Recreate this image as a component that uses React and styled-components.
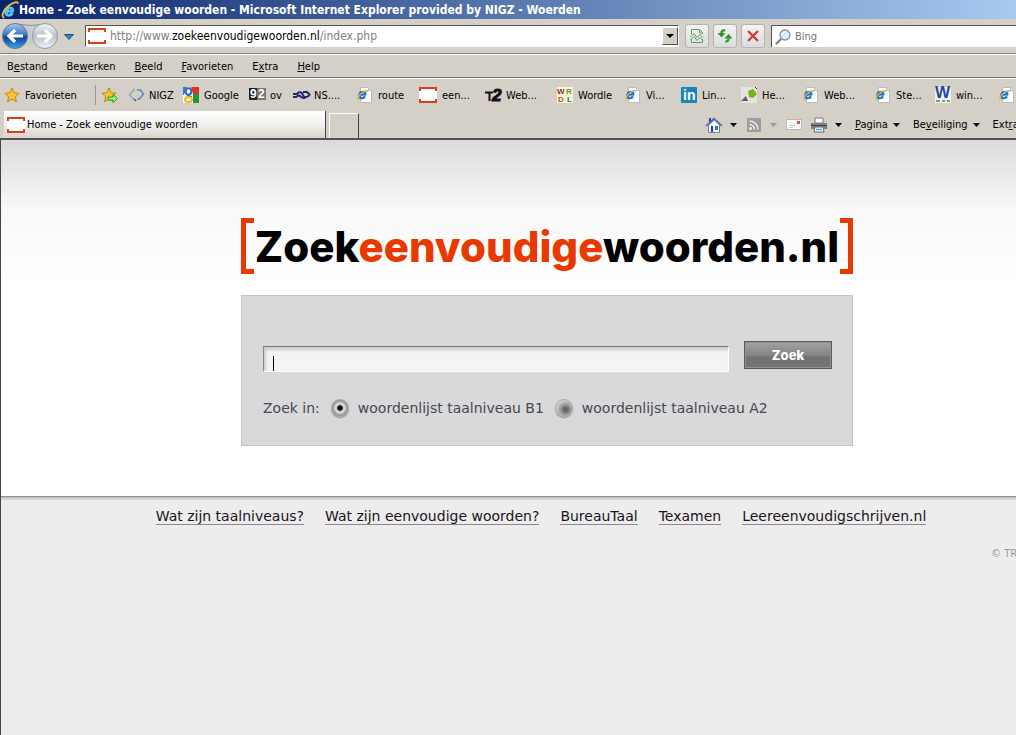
import styled, { createGlobalStyle } from "styled-components";

const bookmarks = [
    { icon: "nigz", text: "NIGZ", width: 55 },
    { icon: "google", text: "Google", width: 66 },
    { icon: "ov", text: "ov", width: 44 },
    { icon: "ns", text: "NS....", width: 64 },
    { icon: "page", text: "route", width: 62 },
    { icon: "site", text: "een...", width: 66 },
    { icon: "t2", text: "Web...", width: 72 },
    { icon: "wordle", text: "Wordle", width: 68 },
    { icon: "page", text: "Vi...", width: 56 },
    { icon: "linkedin", text: "Lin...", width: 60 },
    { icon: "he", text: "He...", width: 62 },
    { icon: "page", text: "Web...", width: 72 },
    { icon: "page", text: "Ste...", width: 60 },
    { icon: "win", text: "win...", width: 64 },
    { icon: "page", text: "", width: 72 },
];

const menu = [
    ["B", "e", "stand"],
    ["Be", "w", "erken"],
    ["", "B", "eeld"],
    ["", "F", "avorieten"],
    ["E", "x", "tra"],
    ["", "H", "elp"],
];

const footerLinks = [
    "Wat zijn taalniveaus?",
    "Wat zijn eenvoudige woorden?",
    "BureauTaal",
    "Texamen",
    "Leereenvoudigschrijven.nl",
];

const star = "M8 1l2.1 4.7 5 .6-3.7 3.4 1 5L8 12.200l-4.400 2.500 1-5L.9 6.300l5-.6z";

function Explorer({ size = 16 }) {
    return (
        <svg width={size} height={size} viewBox="0 0 16 16">
            <text x="3" y="13" fontSize="15" fontWeight="bold" fontStyle="italic" fontFamily="Liberation Sans" fill="#5cc0f5" stroke="#5cc0f5">e</text>
            <path d="M3 15C-.5 14 2 8 7 4c4-3 8-4 8-1.500" fill="none" stroke="#f5c52c" strokeWidth="1.600" />
        </svg>
    );
}

function SiteIcon() {
    return (
        <svg width="18" height="16" viewBox="0 0 18 16">
            <rect width="18" height="16" fill="#fff" />
            <path d="M1 4V1h16v3M1 12v3h16v-3" fill="none" stroke="#d8401c" strokeWidth="2" />
        </svg>
    );
}

function Icon({ name }) {
    if (name === "site") return <SiteIcon />;

    return (
        <svg width="16" height="16" viewBox="0 0 16 16" fontFamily="Liberation Sans" fontWeight="bold">
            {name === "page" && (
                <>
                    <path d="M3.500.5h8l3 3v12h-11z" fill="#fff" stroke="#b4bccb" />
                    <path d="M11.500.5v3h3" fill="#dde5f0" stroke="#b4bccb" />
                    <text x="1" y="12" fontSize="15" fontStyle="italic" fill="#1a6fc4" stroke="#1a6fc4" strokeWidth=".6">e</text>
                    <path d="M1.500 13.500C-.5 12 3 7 6 5S11.500 3 10.500 5" fill="none" stroke="#d9b838" strokeWidth="1.300" />
                </>
            )}
            {name === "nigz" && (
                <>
                    <path d="M6.500 2L1.500 8l4.500 4" fill="none" stroke="#9aa4b2" strokeWidth="1.500" />
                    <path d="M9 3h3.500l3 4-4 5H9" fill="none" stroke="#5f86b4" strokeWidth="1.500" />
                    <path d="M6 12l2 2" stroke="#555" strokeWidth="1.500" />
                </>
            )}
            {name === "google" && (
                <>
                    <rect width="16" height="16" fill="#fff" />
                    <path d="M8 0h8v7h-6z" fill="#e33122" />
                    <path d="M10 7h6v9h-6z" fill="#20973b" />
                    <path d="M0 0h4L1 8H0z" fill="#3b76dc" />
                    <ellipse cx="5.500" cy="4.500" rx="2.800" ry="3.200" fill="#fff" stroke="#2e66c8" strokeWidth="2" />
                    <path d="M4 8.500l5 2" stroke="#2e66c8" strokeWidth="2" />
                    <ellipse cx="5.500" cy="12.500" rx="3.500" ry="2.500" fill="#fff" stroke="#f3b51e" strokeWidth="2" />
                </>
            )}
            {name === "ov" && (
                <>
                    <rect y="1" width="8" height="12" fill="#222" />
                    <rect x="8" y="1" width="9" height="12" fill="#777" />
                    <text x="1" y="11" fontSize="12" fill="#fff">9</text>
                    <text x="9" y="11" fontSize="12" fill="#fff">2</text>
                </>
            )}
            {name === "ns" && (
                <path d="M0 7h4C6 4 9 5 10 8s3 3 7 0M0 10h2c3 0 3-3 5-1s4 3 6 1M10 5h4l3 3" fill="none" stroke="#23236e" strokeWidth="2" />
            )}
            {name === "t2" && (
                <>
                    <path d="M0 5.500h8M4.500 5v9" stroke="#111" strokeWidth="2" />
                    <text x="7" y="14" fontSize="17" fontStyle="italic" fill="#111" stroke="#111">2</text>
                </>
            )}
            {name === "wordle" && (
                <>
                    <rect width="16" height="16" fill="#f8f5d8" />
                    <g fontSize="8">
                        <text x="0" y="7" fill="#8c2f28">W</text>
                        <text x="9" y="7" fill="#67983a">R</text>
                        <text x="1" y="15" fill="#a8622b">D</text>
                        <text x="10" y="15" fill="#2a6a72">L</text>
                    </g>
                </>
            )}
            {name === "linkedin" && (
                <>
                    <rect width="16" height="16" rx="1" fill="#1b86b4" />
                    <text x="2" y="13" fontSize="14" fill="#fff">in</text>
                </>
            )}
            {name === "he" && (
                <>
                    <rect width="16" height="16" fill="#e4e4dc" />
                    <path d="M0 14l5-5 2 5z" fill="#6d4c8c" />
                    <path d="M7 4l5-2 4 5-4 4-4-1z" fill="#73b31e" />
                    <path d="M14 0l2 2" stroke="#333" />
                </>
            )}
            {name === "win" && (
                <>
                    <rect width="16" height="16" fill="#eef0f4" />
                    <text x="0" y="11" fontSize="16" fill="#27479c">W</text>
                    <path d="M1 14h4m2 0h3m2 0h3" stroke="#8aa05c" strokeWidth="2" />
                </>
            )}
            {name === "star" && <path d={star} fill="#fbc531" stroke="#c9830f" />}
            {name === "add" && (
                <>
                    <path d={star} fill="#fbc531" stroke="#c9830f" />
                    <path d="M7 10h5V7.500l4.500 4-4.500 4V13H7z" fill="#a5ef85" stroke="#2b9a2b" />
                </>
            )}
            {name === "home" && (
                <>
                    <path d="M3 1h2v4H3z" fill="#3442a0" />
                    <path d="M2.500 8l6-5 5 5v7.500h-11z" fill="#f4f7ff" stroke="#6a7cb0" />
                    <path d="M0 9l8-7.500L16 9" fill="none" stroke="#4a5ea8" strokeWidth="1.500" />
                    <path d="M5 9h2v6H5z" fill="#1d3f86" />
                    <path d="M9 9h3v4H9z" fill="#3b71bb" />
                </>
            )}
            {name === "feed" && (
                <>
                    <rect x="1" y="1" width="14" height="14" rx="1" fill="#9c9c9c" />
                    <circle cx="4.500" cy="11.500" r="1.500" fill="#eee" />
                    <path d="M3.500 7.500a5 5 0 015 5M3.500 4a8.500 8.500 0 018.500 8.500" fill="none" stroke="#eee" strokeWidth="1.500" />
                </>
            )}
            {name === "mail" && (
                <>
                    <rect x=".5" y="2.500" width="15" height="10" fill="#fafafa" stroke="#b7b7b7" />
                    <path d="M3 8.500h6M3 10.500h4" stroke="#ccc" />
                    <rect x="11" y="4" width="3" height="3" fill="#dc4b4b" />
                </>
            )}
            {name === "print" && (
                <>
                    <path d="M4 1h8v5H4z" fill="#fff" stroke="#777" />
                    <path d="M0 6h16v6H0z" fill="#7d8087" />
                    <path d="M0 8.500h16" stroke="#3d4148" />
                    <path d="M4 10h8l1 5H3z" fill="#fff" stroke="#666" />
                    <path d="M5 12.500h6" stroke="#5b9ad5" strokeWidth="1.500" />
                </>
            )}
            {name === "compat" && (
                <path d="M2.500 6V1.500h8l3 3V6M10.500 2v3h3M2.500 11v3.500h11V11M1.500 9L5 5.500l3 4 3-3 3 3M1.500 12L5 8.500l3 4 3-3 3 3" fill="none" stroke="#5da05d" />
            )}
            {name === "refresh" && (
                <>
                    <path d="M8 2.500C5 2 4.500 3.500 4.500 5" fill="none" stroke="#2a962a" strokeWidth="2.400" />
                    <path d="M.5 5h8l-4 4.500z" fill="#2a962a" />
                    <path d="M8.500 13.500c2.500.2 3-1.500 3-3" fill="none" stroke="#2a962a" strokeWidth="2.400" />
                    <path d="M7.500 10.500h8L11.500 6z" fill="#2a962a" />
                </>
            )}
            {name === "stop" && <path d="M3 3l10 10M13 3L3 13" stroke="#cf3d3d" strokeWidth="2.400" />}
            {name === "search" && (
                <>
                    <path d="M6 10l-5 5" stroke="#7b8290" strokeWidth="2.400" />
                    <circle cx="10" cy="6" r="5" fill="#d9ecfb" stroke="#7f93b3" strokeWidth="1.300" />
                    <path d="M7 5.500q1-2.500 3.500-2.500" fill="none" stroke="#fff" strokeWidth="1.500" />
                </>
            )}
        </svg>
    );
}

function TravelIcon() {
    return (
        <svg width="60" height="28" viewBox="0 0 60 28">
            <defs>
                <linearGradient id="back" x2="0" y2="1">
                    <stop offset="0" stopColor="#a9cdf0" />
                    <stop offset=".45" stopColor="#3a76c4" />
                    <stop offset=".55" stopColor="#0d3f96" />
                    <stop offset="1" stopColor="#3fa6ee" />
                </linearGradient>
                <linearGradient id="forward" x2="0" y2="1">
                    <stop offset="0" stopColor="#f4f6f8" />
                    <stop offset=".5" stopColor="#b7c0ca" />
                    <stop offset="1" stopColor="#edf3f8" />
                </linearGradient>
            </defs>
            <path d="M15 2q15 3 30 0v22q-15-3-30 0z" fill="#c9cacc" />
            <path d="M15 2q15 3 30 0" fill="none" stroke="#8e9095" />
            <circle cx="14" cy="14" r="12.500" fill="url(#back)" stroke="#67768e" />
            <circle cx="44" cy="14" r="12.500" fill="url(#forward)" stroke="#929aa5" />
            <path d="M22 14H8m6-6l-6 6 6 6" fill="none" stroke="#fff" strokeWidth="3.200" />
            <path d="M36 14h14m-6-6l6 6-6 6" fill="none" stroke="#fff" strokeWidth="3.200" />
        </svg>
    );
}

function Arrow({ color = "#000", width = 7 }) {
    return (
        <svg width={width} height="4" viewBox="0 0 8 4" preserveAspectRatio="none">
            <path d="M0 0h8L4 4z" fill={color} />
        </svg>
    );
}

function Browser() {
    return (
        <Chrome>
            <TitleBar>
                <Explorer size={18} />
                Home - Zoek eenvoudige woorden - Microsoft Internet Explorer provided by NIGZ - Woerden
            </TitleBar>
            <NavBar>
                <Travel type="button" aria-label="Vorige en volgende"><TravelIcon /></Travel>
                <History type="button" aria-label="Recente pagina's">
                    <svg width="10" height="6" viewBox="0 0 10 6"><path d="M.5.5h9L5 5.500z" fill="#2c8dc4" stroke="#194e7c" /></svg>
                </History>
                <Address>
                    <SiteIcon />
                    <Url>http://www.<b>zoekeenvoudigewoorden.nl</b>/index.php</Url>
                    <DropButton type="button" aria-label="Adressen tonen"><Arrow width={8} /></DropButton>
                </Address>
                <NavButtons>
                    <NavButton type="button" aria-label="Compatibiliteit"><Icon name="compat" /></NavButton>
                    <NavButton type="button" aria-label="Vernieuwen"><Icon name="refresh" /></NavButton>
                    <NavButton type="button" aria-label="Stoppen"><Icon name="stop" /></NavButton>
                </NavButtons>
                <Bing>
                    <Icon name="search" />
                    <BingInput placeholder="Bing" aria-label="Bing" />
                </Bing>
            </NavBar>
            <MenuBar>
                {menu.map(([before, key, after]) => (
                    <MenuItem type="button" key={after}>{before}<u>{key}</u>{after}</MenuItem>
                ))}
            </MenuBar>
            <LinksBar>
                <Favorites type="button"><Icon name="star" />Favorieten</Favorites>
                <AddFavorite type="button" aria-label="Toevoegen"><Icon name="add" /></AddFavorite>
                {bookmarks.map((item, i) => (
                    <Bookmark href="#" key={i} $width={item.width}>
                        <Icon name={item.icon} />
                        {item.text}
                    </Bookmark>
                ))}
            </LinksBar>
            <TabBar>
                <Tab type="button"><SiteIcon />Home - Zoek eenvoudige woorden</Tab>
                <NewTab type="button" aria-label="Nieuw tabblad" />
                <Commands>
                    <Command type="button" aria-label="Startpagina"><Icon name="home" /><Arrow /></Command>
                    <Command type="button" aria-label="Feeds"><Icon name="feed" /><Arrow color="#999" /></Command>
                    <Command type="button" aria-label="E-mail"><Icon name="mail" /></Command>
                    <Command type="button" aria-label="Afdrukken"><Icon name="print" /><Arrow /></Command>
                    <Command type="button" $text><span><u>P</u>agina</span><Arrow /></Command>
                    <Command type="button" $text><span>Be<u>v</u>eiliging</span><Arrow /></Command>
                    <Command type="button" $text><span>Ext<u>r</u>a</span><Arrow /></Command>
                </Commands>
            </TabBar>
        </Chrome>
    );
}

export default function App() {
    return (
        <Window>
            <GlobalStyle />
            <Browser />
            <Viewport>
                <Page>
                    <Main>
                        <Logo>
                            <Bracket />
                            <LogoText>Zoek<em>eenvoudige</em>woorden.nl</LogoText>
                            <Bracket $right />
                        </Logo>
                        <SearchBox onSubmit={(e) => e.preventDefault()}>
                            <SearchRow>
                                <Field>
                                    <SearchInput type="text" aria-label="Zoekwoord" />
                                    <Caret />
                                </Field>
                                <SearchButton type="submit">Zoek</SearchButton>
                            </SearchRow>
                            <Levels>
                                <span>Zoek in:</span>
                                <Level>
                                    <Radio type="radio" name="niveau" defaultChecked />
                                    woordenlijst taalniveau B1
                                </Level>
                                <Level>
                                    <Radio type="radio" name="niveau" />
                                    woordenlijst taalniveau A2
                                </Level>
                            </Levels>
                        </SearchBox>
                    </Main>
                    <Footer>
                        <FooterLinks>
                            {footerLinks.map((text) => <a href="#" key={text}>{text}</a>)}
                        </FooterLinks>
                        <Copyright>© TRIMM</Copyright>
                    </Footer>
                </Page>
            </Viewport>
        </Window>
    );
}

const GlobalStyle = createGlobalStyle`
    * {
        box-sizing: border-box;
    }

    body {
        margin: 0;
        background: #ededed;
    }

    button {
        padding: 0;
        border: 0;
        background: none;
        font: inherit;
        color: inherit;
        white-space: nowrap;
    }

    svg {
        flex: none;
        overflow: visible;
    }
`

const Window = styled.div`
    display: flex;
    flex-direction: column;
    min-height: 100vh;
    overflow: hidden;
`

const Chrome = styled.header`
    background: #d4d0c8;
    border-bottom: 2px solid #55534f;
    font: 11px "DejaVu Sans Condensed", "DejaVu Sans", sans-serif;
    color: #000;
    white-space: nowrap;
    overflow: hidden;
`

const TitleBar = styled.div`
    display: flex;
    align-items: center;
    height: 19px;
    padding-left: 1px;
    background: linear-gradient(90deg, #0a246a, #a6caf0);
    color: #fff;
    font-size: 12px;
    font-weight: bold;
`

const NavBar = styled.div`
    display: flex;
    align-items: center;
    height: 35px;
    padding-left: 1px;
    border-bottom: 1px solid #848178;
`

const Travel = styled.button`
    display: flex;
`

const History = styled.button`
    width: 24px;
    padding: 0 8px 0 0;
`

const Address = styled.div`
    display: flex;
    align-items: center;
    flex: 2 1 0;
    height: 22px;
    padding-left: 2px;
    background: #fff;
    border: 1px solid #fff;
    border-top-color: #555;
    border-left-color: #555;
`

const Url = styled.span`
    flex: 1;
    padding-left: 4px;
    color: #808080;
    font-size: 12px;

    b {
        color: #000;
        font-weight: normal;
    }
`

const DropButton = styled.button`
    display: flex;
    align-items: center;
    justify-content: center;
    width: 16px;
    height: 18px;
    background: #d4d0c8;
    border: 1px solid #555;
    border-top-color: #fff;
    border-left-color: #fff;
`

const NavButtons = styled.div`
    display: flex;
    gap: 4px;
    padding: 0 6px;
`

const NavButton = styled.button`
    display: flex;
    align-items: center;
    justify-content: center;
    width: 24px;
    height: 24px;
    background: linear-gradient(#f3f3f3, #dcdcdf);
    border: 1px solid #b4b2b5;
    border-radius: 3px;
`

const Bing = styled.div`
    display: flex;
    align-items: center;
    gap: 4px;
    width: 245px;
    height: 22px;
    padding-left: 3px;
    background: #fff;
    border-top: 1px solid #555;
    border-left: 1px solid #555;
`

const BingInput = styled.input`
    flex: 1;
    min-width: 0;
    padding: 0;
    border: 0;
    outline: 0;
    font: inherit;

    &::placeholder {
        color: #777;
    }
`

const MenuBar = styled.nav`
    display: flex;
    align-items: center;
    gap: 19px;
    height: 24px;
    padding-left: 7px;
    border-top: 1px solid #fff;
    border-bottom: 1px solid #77746d;
`

const MenuItem = styled.button`
    height: 20px;

    u {
        text-underline-offset: 1px;
    }
`

const LinksBar = styled.div`
    display: flex;
    align-items: center;
    height: 33px;
    border-top: 1px solid #fff;
`

const Favorites = styled.button`
    display: flex;
    flex: none;
    align-items: center;
    gap: 5px;
    width: 96px;
    height: 20px;
    padding-left: 4px;
    border-right: 1px solid #999;
`

const AddFavorite = styled.button`
    display: flex;
    flex: none;
    width: 32px;
    padding-left: 5px;
`

const Bookmark = styled.a`
    display: flex;
    flex: none;
    align-items: center;
    gap: 5px;
    width: ${({ $width }) => $width}px;
    color: #000;
    text-decoration: none;
`

const TabBar = styled.div`
    display: flex;
    align-items: flex-end;
    height: 27px;
`

const Tab = styled.button`
    display: flex;
    flex: 0 1 322px;
    align-items: center;
    gap: 2px;
    height: 27px;
    margin-left: 4px;
    padding-left: 3px;
    background: linear-gradient(#fff, #f2f1ee 50%, #d8d4cc);
    border-right: 1px solid #444;
`

const NewTab = styled.button`
    width: 30px;
    height: 25px;
    margin-left: 3px;
    border-top: 1px solid #fff;
    border-left: 1px solid #fff;
    border-right: 1px solid #444;
`

const Commands = styled.div`
    display: flex;
    flex: none;
    align-items: center;
    align-self: center;
    width: 310px;
    gap: 9px;
    margin-left: auto;
`

const Command = styled.button`
    display: flex;
    flex: none;
    align-items: center;
    gap: ${({ $text }) => ($text ? 5 : 8)}px;
    height: 24px;
    margin-left: ${({ $text }) => ($text ? 4 : 0)}px;
`

const Viewport = styled.div`
    display: flex;
    flex: 1;
    border-left: 1px solid #444;
    font: 14px "DejaVu Sans", Verdana, sans-serif;
`

const Page = styled.div`
    display: flex;
    flex: 1 0 1092px;
    flex-direction: column;
`

const Main = styled.main`
    display: flex;
    flex-direction: column;
    align-items: center;
    padding: 78px 0 50px;
    background: linear-gradient(#dbdbdd, #f8f8f8 70px, #fff 150px);
`

const Logo = styled.h1`
    display: flex;
    justify-content: space-between;
    width: 612px;
    height: 56px;
    margin: 0 0 21px;
`

const Bracket = styled.span`
    width: 13px;
    border: solid #e83a00;
    border-width: ${({ $right }) => ($right ? "5px 5px 5px 0" : "5px 0 5px 5px")};
`

const LogoText = styled.span`
    font: 800 42px/58px Inter, sans-serif;
    color: #000;

    em {
        color: #e83a00;
        font-style: normal;
    }
`

const SearchBox = styled.form`
    width: 612px;
    padding: 45px 20px 25px 21px;
    background: #d7d9db;
    border: 1px solid #c2c5c9;
`

const SearchRow = styled.div`
    display: flex;
    gap: 15px;
`

const Field = styled.div`
    position: relative;
    flex: 1;
    padding-top: 5px;
`

const SearchInput = styled.input`
    display: block;
    width: 100%;
    height: 26px;
    padding: 4px 9px;
    background: #f4f4f4;
    border: 1px solid #fff;
    border-top-color: #777;
    border-left-color: #888;
    box-shadow: inset 2px 3px 3px #ccc;
    font: inherit;
    outline: 0;
`

const Caret = styled.span`
    position: absolute;
    top: 15px;
    left: 10px;
    width: 1px;
    height: 15px;
    background: #000;
`

const SearchButton = styled.button`
    width: 88px;
    height: 28px;
    background: linear-gradient(#a2a2a2, #858585 50%, #707070 60%, #777);
    border: 1px solid #5b5b5b;
    box-shadow: inset 0 0 0 1px #949494;
    color: #fff;
    font: 800 13px Inter, sans-serif;
`

const Levels = styled.div`
    display: flex;
    align-items: center;
    gap: 11px;
    margin-top: 24px;
    color: #4b4650;
`

const Level = styled.label`
    display: flex;
    align-items: center;
    gap: 9px;
    height: 24px;
`

const Radio = styled.input`
    appearance: none;
    width: 18px;
    height: 18px;
    margin: 0;
    border: 1px solid #aaa;
    border-radius: 50%;
    background: radial-gradient(circle at 60% 60%, #666 2px, #999 5px, #ccc 9px);
    box-shadow: 0 1px 1px #888;

    &:checked {
        background: radial-gradient(circle, #111 2px, #eee 4px, #999 7px, #888 9px);
    }
`

const Footer = styled.footer`
    flex: 1;
    background: linear-gradient(#bdbdbd, #ededed 4px);
    border-top: 1px solid #8f8f8f;
`

const FooterLinks = styled.nav`
    display: flex;
    justify-content: center;
    gap: 21px;
    padding: 12px 12px 0 0;

    a {
        color: #1a1420;
        line-height: 15px;
        border-bottom: 1px solid #8c8592;
        text-decoration: none;
    }
`

const Copyright = styled.p`
    width: 102px;
    margin: 22px 0 0 auto;
    font-size: 10px;
    line-height: 14px;
    color: #999;
`
